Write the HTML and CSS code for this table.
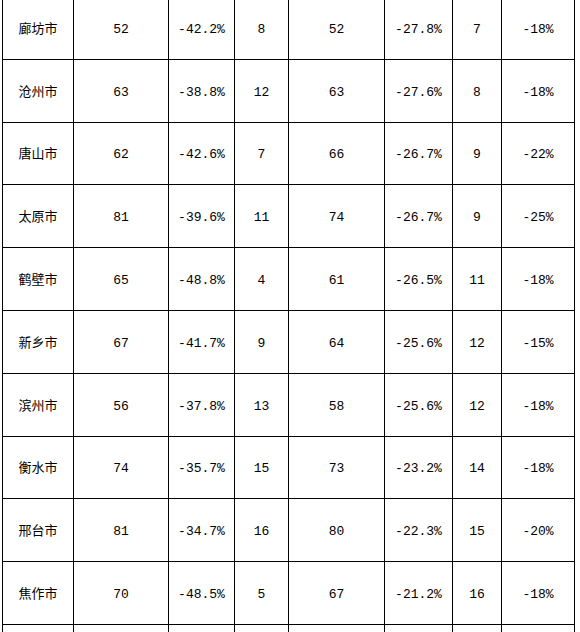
FILE: index.html
```html
<!DOCTYPE html>
<html lang="zh">
<head>
<meta charset="utf-8">
<title>城市数据</title>
<link rel="stylesheet" href="styles.css">
</head>
<body>
<div class="wrap">
<table class="data">
<colgroup>
<col class="c1"><col class="c2"><col class="c3"><col class="c4"><col class="c5"><col class="c6"><col class="c7"><col class="c8">
</colgroup>
<tbody>
<tr><td class="city">廊坊市</td><td>52</td><td>-42.2%</td><td>8</td><td>52</td><td>-27.8%</td><td>7</td><td>-18%</td></tr>
<tr><td class="city">沧州市</td><td>63</td><td>-38.8%</td><td>12</td><td>63</td><td>-27.6%</td><td>8</td><td>-18%</td></tr>
<tr><td class="city">唐山市</td><td>62</td><td>-42.6%</td><td>7</td><td>66</td><td>-26.7%</td><td>9</td><td>-22%</td></tr>
<tr><td class="city">太原市</td><td>81</td><td>-39.6%</td><td>11</td><td>74</td><td>-26.7%</td><td>9</td><td>-25%</td></tr>
<tr><td class="city">鹤壁市</td><td>65</td><td>-48.8%</td><td>4</td><td>61</td><td>-26.5%</td><td>11</td><td>-18%</td></tr>
<tr><td class="city">新乡市</td><td>67</td><td>-41.7%</td><td>9</td><td>64</td><td>-25.6%</td><td>12</td><td>-15%</td></tr>
<tr><td class="city">滨州市</td><td>56</td><td>-37.8%</td><td>13</td><td>58</td><td>-25.6%</td><td>12</td><td>-18%</td></tr>
<tr><td class="city">衡水市</td><td>74</td><td>-35.7%</td><td>15</td><td>73</td><td>-23.2%</td><td>14</td><td>-18%</td></tr>
<tr><td class="city">邢台市</td><td>81</td><td>-34.7%</td><td>16</td><td>80</td><td>-22.3%</td><td>15</td><td>-20%</td></tr>
<tr><td class="city">焦作市</td><td>70</td><td>-48.5%</td><td>5</td><td>67</td><td>-21.2%</td><td>16</td><td>-18%</td></tr>
<tr><td class="city"></td><td></td><td></td><td></td><td></td><td></td><td></td><td></td></tr>
</tbody>
</table>
</div>
</body>
</html>
```
FILE: styles.css
```css
html, body {
  margin: 0;
  padding: 0;
  background: #fff;
}
.wrap {
  padding-left: 2px;
  margin-top: -4px;
  overflow: hidden;
  height: 636px;
}
.data {
  border-collapse: collapse;
  table-layout: fixed;
  width: 573px;
  font-family: "Liberation Mono", monospace;
  font-size: 13px;
  color: #000;
}
.c1 { width: 71px; }
.c2 { width: 95px; }
.c3 { width: 66px; }
.c4 { width: 54px; }
.c5 { width: 96px; }
.c6 { width: 68px; }
.c7 { width: 49px; }
.c8 { width: 73px; }
.data td {
  border: 1px solid #000;
  height: 57.8px;
  padding: 4px 0 0 0;
  text-align: center;
  vertical-align: middle;
  line-height: 16px;
}
.data td.city {
  padding: 2px 0 2px 0;
  font-family: "Noto Sans CJK SC", sans-serif;
  font-size: 13px;
}
```
